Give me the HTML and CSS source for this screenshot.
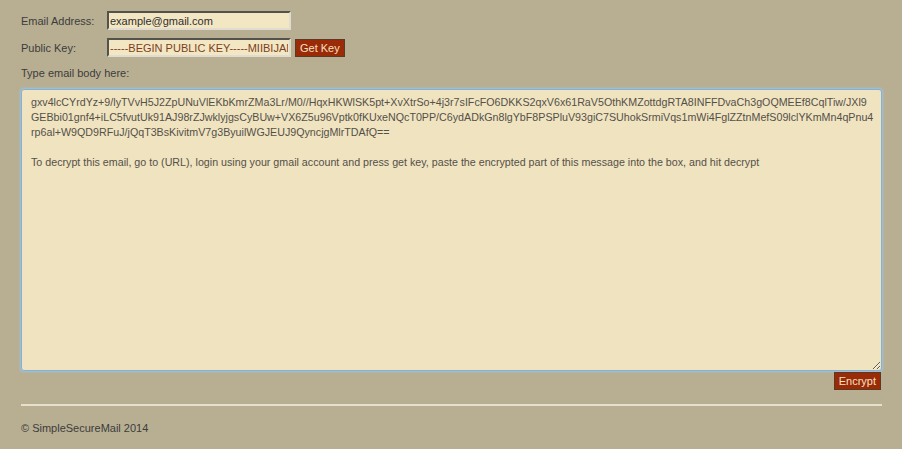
FILE: index.html
```html
<!DOCTYPE html>
<html>
<head>
<meta charset="utf-8">
<link rel="stylesheet" href="styles.css">
</head>
<body>
<div class="page">
  <div class="row">
    <label class="lbl">Email Address:</label>
    <input class="field" type="text" value="example@gmail.com">
  </div>
  <div class="row">
    <label class="lbl">Public Key:</label>
    <input class="field key" type="text" value="-----BEGIN PUBLIC KEY-----MIIBIJANEgkqhkiG9w0BAQEFAAOCAQ8AMIIBCgKCAQEA">
    <button class="btn">Get Key</button>
  </div>
  <p class="prompt">Type email body here:</p>
  <textarea class="body" spellcheck="false">gxv4lcCYrdYz+9/lyTVvH5J2ZpUNuVlEKbKmrZMa3Lr/M0//HqxHKWlSK5pt+XvXtrSo+4j3r7sIFcFO6DKKS2qxV6x61RaV5OthKMZottdgRTA8INFFDvaCh3gOQMEEf8CqlTiw/JXl9
GEBbi01gnf4+iLC5fvutUk91AJ98rZJwklyjgsCyBUw+VX6Z5u96Vptk0fKUxeNQcT0PP/C6ydADkGn8lgYbF8PSPluV93giC7SUhokSrmiVqs1mWi4FglZZtnMefS09lclYKmMn4qPnu4
rp6al+W9QD9RFuJ/jQqT3BsKivitmV7g3ByuilWGJEUJ9QyncjgMlrTDAfQ==

To decrypt this email, go to (URL), login using your gmail account and press get key, paste the encrypted part of this message into the box, and hit decrypt</textarea>
  <div class="actions">
    <button class="btn">Encrypt</button>
  </div>
  <hr class="rule">
  <footer class="foot">© SimpleSecureMail 2014</footer>
</div>
</body>
</html>
```

FILE: styles.css
```css
html, body {
  margin: 0;
  padding: 0;
  background: #b8af92;
}
body {
  font-family: "Liberation Sans", Arial, sans-serif;
  font-size: 11px;
  color: #3a3a3a;
}
.page {
  width: 861px;
  padding: 11px 0 0 21px;
  display: flex;
  flex-direction: column;
}
.row {
  display: flex;
  align-items: center;
  height: 19px;
  margin-bottom: 8px;
}
.lbl {
  width: 86px;
  color: #3c3c3c;
}
.field {
  box-sizing: border-box;
  width: 184px;
  height: 19px;
  margin: 0;
  padding: 1px 1px;
  background: #f3e6c2;
  border: 2px inset #a8a49a;
  border-right-color: #e0dcd0;
  border-bottom-color: #e0dcd0;
  font-family: "Liberation Sans", Arial, sans-serif;
  font-size: 11px;
  color: #2e2e2e;
}
.field.key {
  color: #7a3f22;
}
.btn {
  box-sizing: border-box;
  height: 18px;
  margin: 0 0 0 4px;
  padding: 0 4px;
  background: #9a2a08;
  border: 1px solid #5a3a20;
  color: #f3e3c0;
  font-family: "Liberation Sans", Arial, sans-serif;
  font-size: 11px;
}
.prompt {
  margin: 2px 0 9px;
  line-height: 13px;
  color: #3c3c3c;
}
.body {
  box-sizing: border-box;
  width: 861px;
  height: 282px;
  margin: 0;
  padding: 5px 9px;
  background: #efe3c0;
  border: 1px solid #86b0d4;
  box-shadow: 0 0 2px 1px #9cc2e2;
  border-radius: 3px;
  outline: none;
  font-family: "Liberation Sans", Arial, sans-serif;
  font-size: 10.7px;
  line-height: 15px;
  color: #555048;
  white-space: pre;
  overflow: hidden;
  resize: both;
}
.actions {
  display: flex;
  justify-content: flex-end;
  padding-right: 1px;
  margin-top: 1px;
}
.rule {
  width: 861px;
  margin: 14px 0 0;
  border: 0;
  height: 2px;
  background: #e6dfcc;
}
.foot {
  margin-top: 15px;
  line-height: 14px;
  color: #3c3c3c;
}
```
